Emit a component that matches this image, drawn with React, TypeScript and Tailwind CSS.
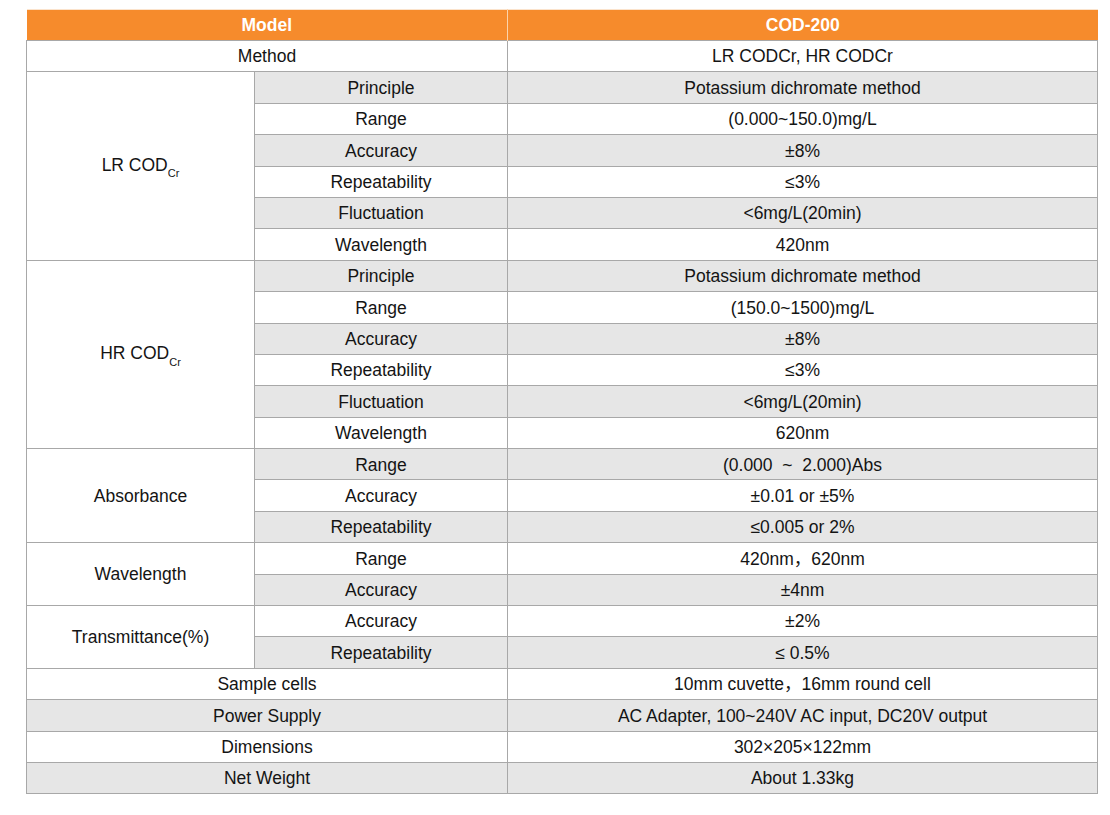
import React from "react";

type Row = { label: string; value: string };
type Group = { title: React.ReactNode; rows: Row[] };

const Cod = ({ p }: { p: string }) => (
  <span>
    {p} COD<sub className="text-[11px] relative top-[2px] align-sub leading-none">Cr</sub>
  </span>
);

const groups: Group[] = [
  {
    title: <Cod p="LR" />,
    rows: [
      { label: "Principle", value: "Potassium dichromate method" },
      { label: "Range", value: "(0.000~150.0)mg/L" },
      { label: "Accuracy", value: "±8%" },
      { label: "Repeatability", value: "≤3%" },
      { label: "Fluctuation", value: "<6mg/L(20min)" },
      { label: "Wavelength", value: "420nm" },
    ],
  },
  {
    title: <Cod p="HR" />,
    rows: [
      { label: "Principle", value: "Potassium dichromate method" },
      { label: "Range", value: "(150.0~1500)mg/L" },
      { label: "Accuracy", value: "±8%" },
      { label: "Repeatability", value: "≤3%" },
      { label: "Fluctuation", value: "<6mg/L(20min)" },
      { label: "Wavelength", value: "620nm" },
    ],
  },
  {
    title: "Absorbance",
    rows: [
      { label: "Range", value: "(0.000 \u00a0~\u00a0 2.000)Abs" },
      { label: "Accuracy", value: "±0.01 or ±5%" },
      { label: "Repeatability", value: "≤0.005 or 2%" },
    ],
  },
  {
    title: "Wavelength",
    rows: [
      { label: "Range", value: "420nm，620nm" },
      { label: "Accuracy", value: "±4nm" },
    ],
  },
  {
    title: "Transmittance(%)",
    rows: [
      { label: "Accuracy", value: "±2%" },
      { label: "Repeatability", value: "≤ 0.5%" },
    ],
  },
];

const tail: Row[] = [
  { label: "Sample cells", value: "10mm cuvette，16mm round cell" },
  { label: "Power Supply", value: "AC Adapter, 100~240V AC input, DC20V output" },
  { label: "Dimensions", value: "302×205×122mm" },
  { label: "Net Weight", value: "About 1.33kg" },
];

const cell = "border-[1.5px] border-[#a8a8a8] text-center align-middle p-0 pt-[2px] leading-none";

export default function App() {
  let idx = 0;
  const bg = (i: number) => (i % 2 === 1 ? "bg-[#e6e6e6]" : "bg-white");
  const rows: React.ReactNode[] = [];

  rows.push(
    <tr key="method" className="h-[31.4px]">
      <td colSpan={2} className={`${cell} ${bg(idx)}`}>Method</td>
      <td className={`${cell} ${bg(idx)}`}>LR CODCr, HR CODCr</td>
    </tr>
  );
  idx++;

  groups.forEach((g, gi) => {
    g.rows.forEach((r, ri) => {
      const b = bg(idx);
      rows.push(
        <tr key={`g${gi}-${ri}`} className="h-[31.4px]">
          {ri === 0 && (
            <td rowSpan={g.rows.length} className={`${cell} bg-white`}>
              {g.title}
            </td>
          )}
          <td className={`${cell} ${b}`}>{r.label}</td>
          <td className={`${cell} ${b}`}>{r.value}</td>
        </tr>
      );
      idx++;
    });
  });

  tail.forEach((r, i) => {
    const b = bg(idx);
    rows.push(
      <tr key={`t${i}`} className="h-[31.4px]">
        <td colSpan={2} className={`${cell} ${b}`}>{r.label}</td>
        <td className={`${cell} ${b}`}>{r.value}</td>
      </tr>
    );
    idx++;
  });

  return (
    <div
      className="w-[1110px] h-[815px] bg-white pt-[9px] pl-[26px] text-[#141414] text-[17.5px]"
      style={{ fontFamily: '"Liberation Sans", Arial, "Noto Sans CJK SC", sans-serif' }}
    >
      <table className="border-collapse table-fixed w-[1071px]">
        <colgroup>
          <col className="w-[228px]" />
          <col className="w-[253px]" />
          <col className="w-[590px]" />
        </colgroup>
        <thead>
          <tr className="h-[31px]">
            <th
              colSpan={2}
              className="bg-[#f68b2c] text-white font-bold text-center p-0 pt-[2px] border-t border-t-[#fbe3cc] border-r-[1.5px] border-r-[#fcd3aa] leading-none"
            >
              Model
            </th>
            <th className="bg-[#f68b2c] text-white font-bold text-center p-0 pt-[2px] border-t border-t-[#fbe3cc] leading-none">
              COD-200
            </th>
          </tr>
        </thead>
        <tbody>{rows}</tbody>
      </table>
    </div>
  );
}
